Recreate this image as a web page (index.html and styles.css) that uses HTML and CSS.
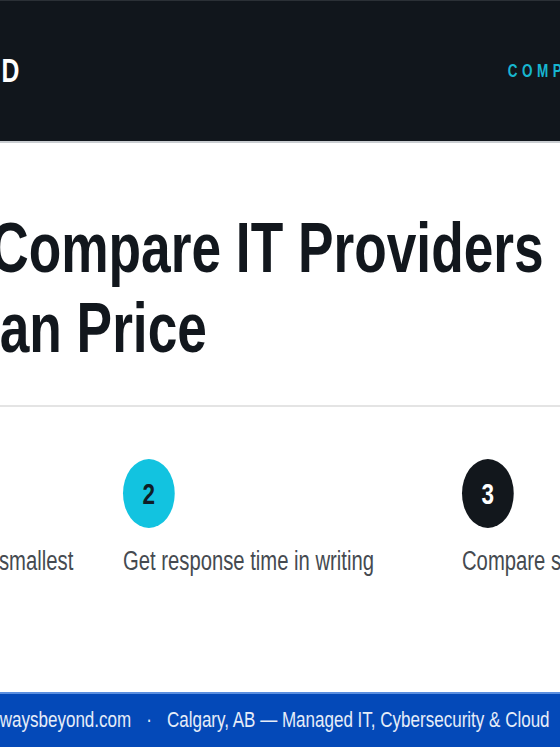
FILE: index.html
```html
<!DOCTYPE html>
<html lang="en">
<head>
    <meta charset="UTF-8">
    <meta name="viewport" content="width=device-width, initial-scale=1.0">
    <title>Compare IT Providers | Always Beyond</title>
    <link rel="stylesheet" href="styles.css">
</head>
<body>

<div class="frame">
    <div class="page">

        <header class="site-header">
            <div class="brand">ALWAYSBEYOND</div>
            <nav class="nav">COMPARE PROVIDERS</nav>
        </header>

        <section class="hero">
            <h1>Compare IT Providers<br>on More Than Price</h1>
        </section>

        <section class="steps">
            <div class="step">
                <div class="step-num">1</div>
                <p class="step-text">List every fee, even the smallest</p>
            </div>
            <div class="step">
                <div class="step-num active">2</div>
                <p class="step-text">Get response time in writing</p>
            </div>
            <div class="step">
                <div class="step-num dark">3</div>
                <p class="step-text">Compare security practices</p>
            </div>
        </section>

        <footer class="site-footer">
            alwaysbeyond.com<span class="sep">·</span>Calgary, AB — Managed IT, Cybersecurity &amp; Cloud
        </footer>

    </div>
</div>

</body>
</html>
```

FILE: styles.css
```css
* {
    box-sizing: border-box;
}

body {
    margin: 0;
    overflow: hidden;
    background-color: #ffffff;
    font-family: "Liberation Sans", Arial, sans-serif;
}

/* the page is laid out wide and squeezed into the window */
.frame {
    width: 747px;
    height: 747px;
    overflow: hidden;
    transform: scaleX(0.75);
    transform-origin: 0 0;
}

.page {
    width: 1500px;
    margin-left: -288px;
}

.site-header {
    display: flex;
    align-items: center;
    height: 143px;
    background-color: #11161c;
    border-top: 1px solid #2b3036;
    border-bottom: 2px solid #c9cdd1;
}

.brand {
    width: 315px;
    text-align: right;
    color: #ffffff;
    font-size: 33px;
    font-weight: bold;
    letter-spacing: 1px;
}

.nav {
    margin-left: 650px;
    color: #17b6d0;
    font-size: 18px;
    font-weight: bold;
    letter-spacing: 6px;
}

.hero {
    padding: 65px 0 37px;
    border-bottom: 2px solid #e4e4e4;
}

/* second line hangs out to the left of the first */
.hero h1 {
    margin: 0 0 0 -95px;
    text-indent: 370px;
    color: #12171d;
    font-size: 71px;
    line-height: 80px;
    font-weight: bold;
    white-space: nowrap;
}

.steps {
    display: grid;
    grid-template-columns: repeat(3, 420px);
    column-gap: 32px;
    padding: 52px 0 112px;
}

.step-num {
    display: flex;
    align-items: center;
    justify-content: center;
    width: 69px;
    height: 69px;
    border-radius: 50%;
    background-color: #12c3e0;
    color: #0f1d26;
    font-size: 30px;
    font-weight: bold;
}

.step-num.active {
    background-color: #12c3e0;
}

.step-num.dark {
    background-color: #12171c;
    color: #ffffff;
}

.step-text {
    margin: 14px 0 0;
    color: #454a50;
    font-size: 27px;
    line-height: 38px;
    white-space: nowrap;
}

.site-footer {
    padding: 12px 0 40px 270px;
    background-color: #0449b8;
    border-top: 2px solid #5b8fe0;
    color: #e6edf8;
    font-size: 22.7px;
    line-height: 26px;
    white-space: nowrap;
}

.sep {
    margin: 0 20px;
}
```
